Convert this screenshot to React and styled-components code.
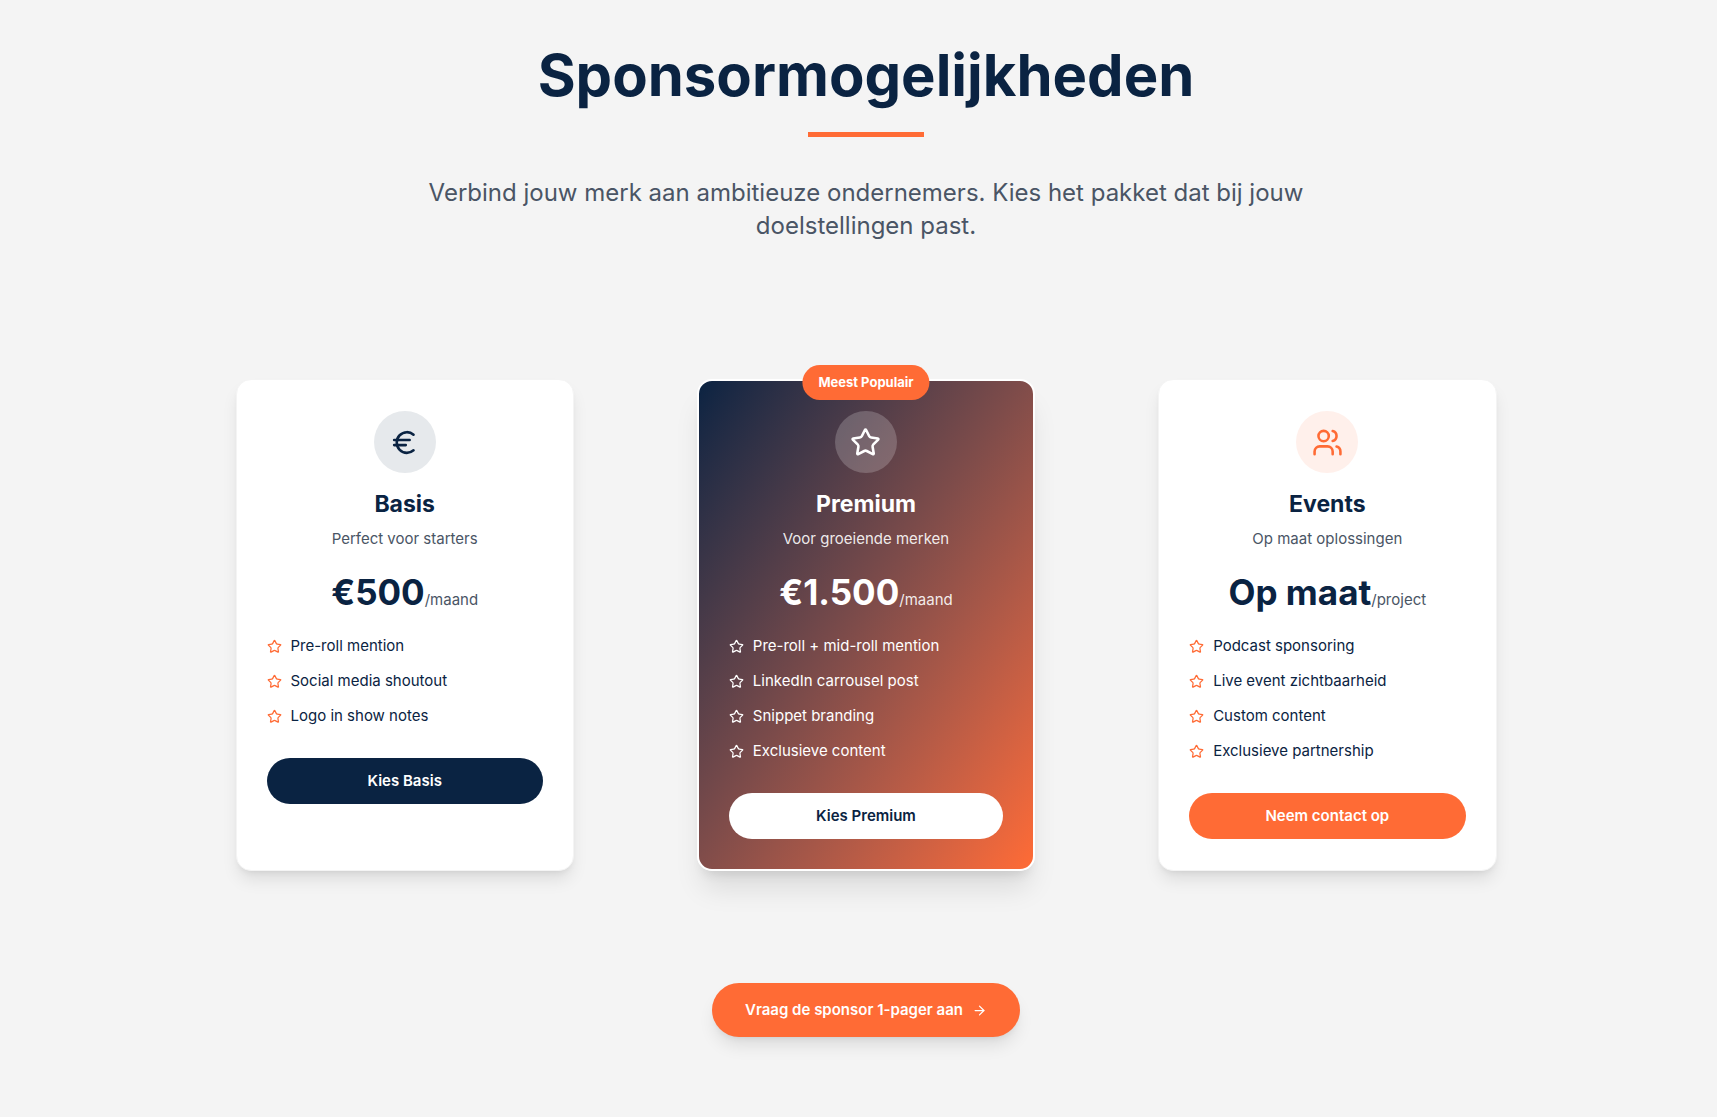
import React from "react";
import styled, { createGlobalStyle, css } from "styled-components";
import { ArrowRight, Euro, Star, Users } from "lucide-react";

const navy = "#0a2342";
const orange = "#ff6b35";
const slate = "#4a5565";

const GlobalStyle = createGlobalStyle`
  *, *::before, *::after { box-sizing: border-box; }
  body {
    margin: 0;
    background: #f4f4f4;
    color: ${navy};
    font-family: Inter, "Liberation Sans", sans-serif;
  }
  h1, h2, p, ul { margin: 0; padding: 0; }
`;

const Section = styled.section`
  display: flex;
  flex-direction: column;
  align-items: center;
  padding: 39px 24px 79px 39px;
`;

const Header = styled.header`
  display: flex;
  flex-direction: column;
  align-items: center;
  text-align: center;
`;

const Heading = styled.h1`
  font-size: 58px;
  line-height: 72px;
  font-weight: 700;
`;

const Rule = styled.div`
  width: 116px;
  height: 5px;
  margin: 21px 0 39px;
  background: ${orange};
`;

const Intro = styled.p`
  max-width: 930px;
  color: ${slate};
  font-size: 24px;
  line-height: 33px;
`;

const Plans = styled.div`
  display: grid;
  grid-template-columns: repeat(auto-fit, minmax(300px, 1fr));
  gap: 48px 123px;
  width: 100%;
  max-width: 1261px;
  margin: 137px 0 112px;
`;

const Card = styled.article`
  position: relative;
  display: flex;
  flex-direction: column;
  align-items: center;
  padding: 31px 30px;
  border: 1px solid #f4f4f4;
  border-radius: 15px;
  background: #fff;
  box-shadow: 0 11px 17px -3px rgba(0, 0, 0, 0.1), 0 4px 7px -4px rgba(0, 0, 0, 0.1);
  ${(p) =>
    p.$featured &&
    css`
      padding: 30px;
      border: 2px solid #fff;
      background: linear-gradient(to bottom right in oklab, ${navy}, ${orange});
      color: #fff;
      box-shadow: 0 22px 28px -5px rgba(0, 0, 0, 0.1), 0 9px 11px -6px rgba(0, 0, 0, 0.1);
    `}
`;

const Badge = styled.span`
  position: absolute;
  top: -16px;
  left: 50%;
  transform: translateX(-50%);
  padding: 8px 16px;
  border-radius: 99px;
  background: ${orange};
  color: #fff;
  font-size: 13px;
  line-height: 19px;
  font-weight: 700;
  white-space: nowrap;
`;

const IconCircle = styled.div`
  display: grid;
  place-items: center;
  width: 62px;
  height: 62px;
  border-radius: 50%;
  background: ${(p) => p.$fill};
  color: ${(p) => p.$ink};
`;

const PlanName = styled.h2`
  margin: 15px 0 7px;
  font-size: 23px;
  line-height: 33px;
  font-weight: 700;
`;

const Muted = styled.p`
  color: ${(p) => (p.$light ? "rgba(255, 255, 255, 0.9)" : slate)};
  font-size: 15px;
  line-height: 22px;
`;

const Price = styled.p`
  margin: 20px 0 21px;
  font-size: 35px;
  line-height: 44px;
  font-weight: 700;
`;

const Period = styled(Muted).attrs({ as: "span" })`
  font-weight: 400;
`;

const Features = styled.ul`
  display: flex;
  flex-direction: column;
  align-self: stretch;
  gap: 13px;
  list-style: none;
`;

const Feature = styled.li`
  display: flex;
  align-items: center;
  gap: 9px;
  font-size: 15px;
  line-height: 22px;

  svg { color: ${(p) => (p.$light ? "#fff" : orange)}; }
`;

const Button = styled.button`
  align-self: stretch;
  margin-top: 31px;
  padding: 12px 24px;
  border: 0;
  border-radius: 99px;
  background: ${(p) => p.$fill};
  color: ${(p) => p.$ink};
  font-family: inherit;
  font-size: 15px;
  line-height: 22px;
  font-weight: 600;
  cursor: pointer;
`;

const CallToAction = styled.a`
  display: inline-flex;
  align-items: center;
  gap: 9px;
  padding: 16px 33px;
  border-radius: 99px;
  background: ${orange};
  color: #fff;
  font-size: 15px;
  line-height: 22px;
  font-weight: 600;
  text-decoration: none;
  box-shadow: 0 11px 17px -3px rgba(0, 0, 0, 0.1), 0 4px 7px -4px rgba(0, 0, 0, 0.1);
`;

const plans = [
  {
    name: "Basis",
    tagline: "Perfect voor starters",
    price: "€500",
    period: "/maand",
    features: ["Pre-roll mention", "Social media shoutout", "Logo in show notes"],
    action: "Kies Basis",
    Icon: Euro,
    circle: { $fill: "#e6e9ec", $ink: navy },
    button: { $fill: navy, $ink: "#fff" },
  },
  {
    name: "Premium",
    tagline: "Voor groeiende merken",
    price: "€1.500",
    period: "/maand",
    features: [
      "Pre-roll + mid-roll mention",
      "LinkedIn carrousel post",
      "Snippet branding",
      "Exclusieve content",
    ],
    action: "Kies Premium",
    Icon: Star,
    featured: true,
    circle: { $fill: "rgba(255, 255, 255, 0.2)", $ink: "#fff" },
    button: { $fill: "#fff", $ink: navy },
  },
  {
    name: "Events",
    tagline: "Op maat oplossingen",
    price: "Op maat",
    period: "/project",
    features: [
      "Podcast sponsoring",
      "Live event zichtbaarheid",
      "Custom content",
      "Exclusieve partnership",
    ],
    action: "Neem contact op",
    Icon: Users,
    circle: { $fill: "#fff0eb", $ink: orange },
    button: { $fill: orange, $ink: "#fff" },
  },
];

function Plan({ plan }) {
  const { Icon, featured } = plan;
  return (
    <Card $featured={featured}>
      {featured && <Badge>Meest Populair</Badge>}
      <IconCircle {...plan.circle}>
        <Icon size={31} aria-hidden="true" />
      </IconCircle>
      <PlanName>{plan.name}</PlanName>
      <Muted $light={featured}>{plan.tagline}</Muted>
      <Price>
        {plan.price}
        <Period $light={featured}>{plan.period}</Period>
      </Price>
      <Features>
        {plan.features.map((feature) => (
          <Feature key={feature} $light={featured}>
            <Star size={15} aria-hidden="true" />
            {feature}
          </Feature>
        ))}
      </Features>
      <Button type="button" {...plan.button}>
        {plan.action}
      </Button>
    </Card>
  );
}

export default function App() {
  return (
    <>
      <GlobalStyle />
      <Section>
        <Header>
          <Heading>Sponsormogelijkheden</Heading>
          <Rule />
          <Intro>
            Verbind jouw merk aan ambitieuze ondernemers. Kies het pakket dat bij jouw
            doelstellingen past.
          </Intro>
        </Header>
        <Plans>
          {plans.map((plan) => (
            <Plan key={plan.name} plan={plan} />
          ))}
        </Plans>
        <CallToAction href="#sponsor-1-pager">
          Vraag de sponsor 1-pager aan
          <ArrowRight size={15} aria-hidden="true" />
        </CallToAction>
      </Section>
    </>
  );
}
